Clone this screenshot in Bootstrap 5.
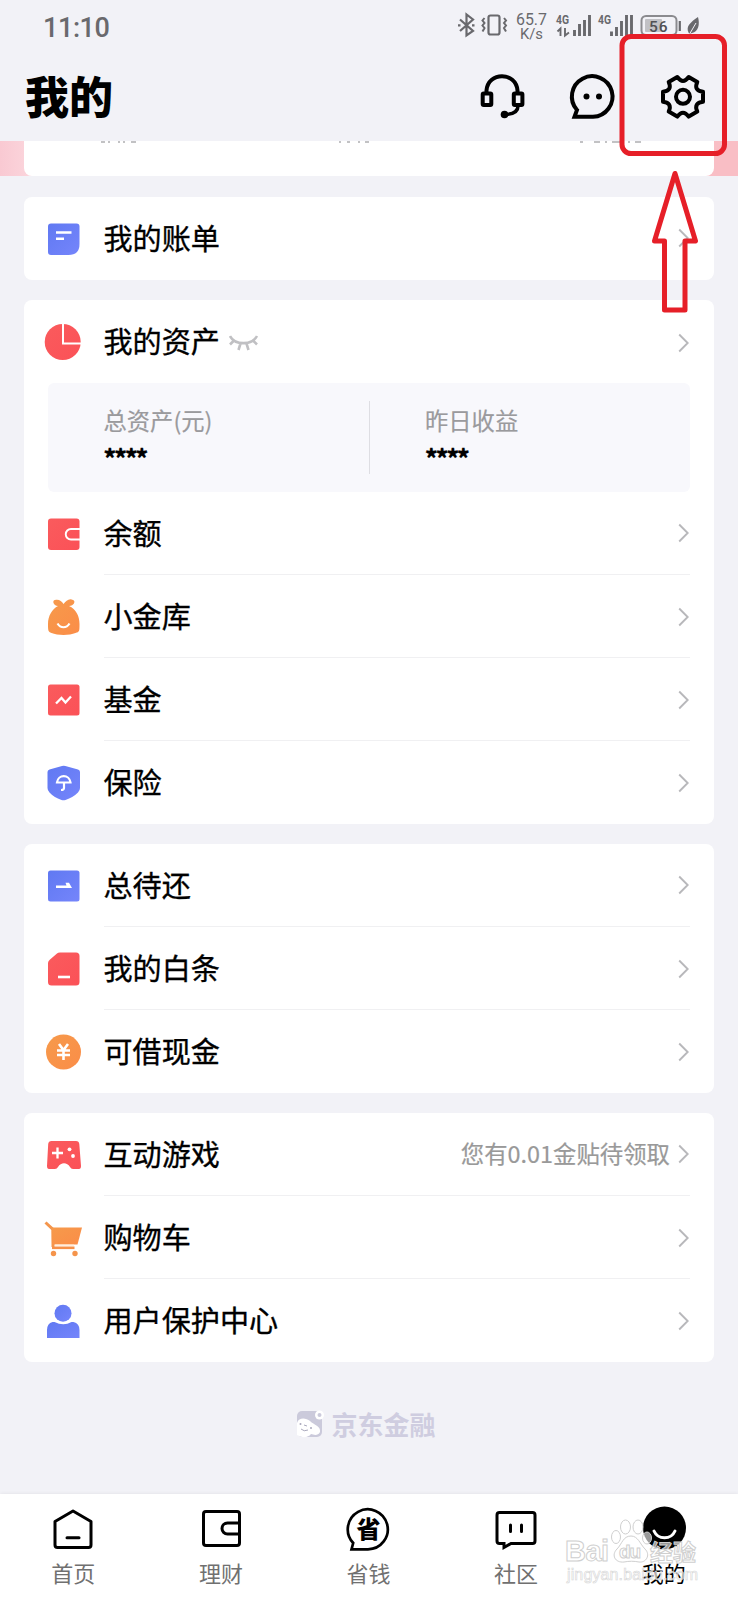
<!DOCTYPE html>
<html lang="zh-CN">
<head>
<meta charset="utf-8">
<meta name="viewport" content="width=device-width, initial-scale=1">
<title>我的</title>
<link href="https://cdn.jsdelivr.net/npm/bootstrap@5.3.0/dist/css/bootstrap.min.css" rel="stylesheet">
<style>
body{background:#f2f2f7;color:#000;font-family:"Noto Sans CJK SC",sans-serif;width:738px;height:1600px;overflow:hidden}
body>*{flex:none}
svg{display:block;flex:none}
.status{height:52px;padding:0 38px 0 43px;color:#69696d;font-family:Roboto,sans-serif}
.clock{font:500 27px/56px Roboto,sans-serif;letter-spacing:-.4px}
.topbar{height:89px;padding:0 32px 0 25px}
.page-title{font-size:44px;font-weight:900;line-height:87px;margin:0}
.strip{height:35px;padding:0 24px;background:linear-gradient(90deg,#f9c9d2 0,#fbd5dc 30px,#f9bec5 700px)}
.strip-card{height:35px;border-radius:0 0 8px 8px;background:#fff}
.panel-card{border-radius:8px;background:#fff;margin:0 24px 20px}
.item{height:83px;padding:0 24px 0 19px}
.item-body{margin:-2px 0 0 21px;height:100%;font-size:29.1px;line-height:40px}
.item+.item .item-body{border-top:1.5px solid #f0f0f2}
.item-name{margin:-2px 0 0 -.5px;-webkit-text-stroke:.35px #000}
.item .chev{margin:1px 1px 0 auto}
.note{font-size:23.4px;color:#999;margin:-1px 0 0 auto;-webkit-text-stroke:.2px #999}
.note+.chev{margin-left:8px!important}
.assets{margin:0 24px;height:109px;background:#f8f8fc;border-radius:6px}
.assets>div{padding:20px 0 0 55.5px;width:50%}
.assets .cap{font-size:23.3px;line-height:34px;color:#9a9a9d;-webkit-text-stroke:.2px #9a9a9d}
.stars{font:900 24px/30px "Noto Sans CJK SC",sans-serif;margin-top:5px;letter-spacing:-2px;-webkit-text-stroke:.2px #000}
.split{height:73px;width:1px;background:#dedee3;align-self:center}
.brand{color:#cfcde0;font-size:26px;font-weight:700;line-height:38px;height:112px;padding-right:7px;margin-top:-1px}
.tabs{height:106px;background:#fff;box-shadow:0 0 4px rgba(0,0,0,.08)}
.tab{flex:1 1 0;padding:11px 1px 0 0;font-size:22px;line-height:32px;color:#707070}
.tab svg{margin-bottom:5px}
.overlay{left:0;top:0;pointer-events:none}
</style>
</head>
<body class="d-flex flex-column position-relative">
<svg width="0" height="0" class="position-absolute">
<defs>
<linearGradient id="b" x1="0" y1="0" x2="1" y2="1"><stop stop-color="#6079f2"/><stop offset="1" stop-color="#7585fb"/></linearGradient>
<linearGradient id="r" x1="0" y1="0" x2="1" y2="1"><stop stop-color="#fa5b5d"/><stop offset="1" stop-color="#fb5157"/></linearGradient>
<linearGradient id="o" x1="0" y1="0" x2="1" y2="1"><stop stop-color="#f69a4b"/><stop offset="1" stop-color="#fb8d48"/></linearGradient>
<symbol id="chev" viewBox="0 0 11 20"><path d="M1.2 1.500 9.700 10 1.200 18.500" fill="none" stroke="#b8b8bb" stroke-width="1.900"/></symbol>
</defs></svg>

<header>
<div class="status d-flex align-items-start">
<div class="clock me-auto">11:10</div>
<svg width="263" height="52" viewBox="457 0 263 52" fill="none" stroke="#69696d" stroke-width="1.8" style="margin-right:-20px">
<path d="M460 19.500 473 31l-6.500 4.500V14.500L473 19.500 460 31M458 25.300h2.500M472 25.300h2.500" stroke-width="2.200"/>
<rect x="488.500" y="15.500" width="11" height="19" rx="2" stroke-width="2.200"/>
<path d="m484.500 18-2 2.500 2 2.500-2 2.500 2 2.500-2 3.500M504 18l2 2.500-2 2.500 2 2.500-2 2.500 2 3.500" stroke-width="2"/>
<g fill="#69696d" stroke="none" font-family="Roboto,sans-serif"><text x="516" y="24.500" font-size="16" textLength="31" lengthAdjust="spacingAndGlyphs">65.7</text><text x="520" y="38.500" font-size="15.500" textLength="23" lengthAdjust="spacingAndGlyphs">K/s</text>
<text x="556" y="24" font-size="12.500" font-weight="700" textLength="13" lengthAdjust="spacingAndGlyphs">4G</text><text x="598" y="24" font-size="12.500" font-weight="700" textLength="13" lengthAdjust="spacingAndGlyphs">4G</text></g>
<path d="M574.500 36v-6M579.500 36v-12M584.500 36v-16M589.500 36V15M611.500 36v-4.500M616.500 36v-9M621.500 36v-15M626.500 36V15M631.500 36V15" stroke-width="2.900"/>
<path d="M557.500 31.500 560.500 28.500V36M565 28v7.500l4-3" stroke-width="1.900"/>
<rect x="641.500" y="16" width="35" height="19" rx="4.500" stroke="#8b8b8f" stroke-width="2"/>
<rect x="645" y="19" width="17" height="13" rx="1" fill="#c1c1c5" stroke="none"/>
<text x="649" y="31.500" font-size="15.500" font-weight="500" fill="#505054" stroke="none" font-family="Roboto,sans-serif" textLength="18.500">56</text>
<path d="M679.800 21v10" stroke-width="2.200"/>
<path d="M698 17c2 7 .5 15-6 16l-2.500 1-1-1.500C685.500 26 691 22 698 17Z" fill="#69696d" stroke="none"/><path d="m689 35 7-12" stroke="#f2f2f7" stroke-width="1"/>
</svg>
</div>
<div class="topbar d-flex">
<h1 class="page-title me-auto">我的</h1>
<svg width="228" height="89" viewBox="478 52 228 89" fill="none" stroke="#000" stroke-width="4">
<path d="M486.500 92V90.500C488 71.500 516 71.500 517.500 90.500V92"/>
<rect x="482.700" y="93.500" width="8.600" height="11.500" rx="1"/><rect x="513.800" y="93.500" width="8.600" height="11.500" rx="1"/>
<path d="M518 106c0 5-4 8-12 8.500" stroke-width="3.500"/><circle cx="504.500" cy="114.500" r="3.800" fill="#000" stroke="none"/>
<path d="M577 110a20.300 20.300 0 1 1 16 6.800h-18.500Z"/><circle cx="586.500" cy="96.500" r="3" fill="#000" stroke="none"/><circle cx="599" cy="96.500" r="3" fill="#000" stroke="none"/>
<g transform="translate(683 96.800)" stroke-width="4" stroke-linejoin="round"><path d="M20 5Q10.400 6 14.300 14.800L5.700 19.800Q0 12-5.700 19.800L-14.300 14.800Q-10.400 6-20 5V-5Q-10.400-6-14.300-14.800L-5.700-19.800Q0-12 5.700-19.800L14.300-14.800Q10.400-6 20-5Z"/><circle r="7"/></g>
</svg>
</div>
</header>

<div class="strip mb-0"><div class="strip-card">
<svg width="690" height="3" viewBox="24 0 690 3" stroke="#85858a" stroke-width="1.200"><path d="M101 1h4m3 0h2m8 0h2m3 0h2m6 0h5M339 1h2m6 0h3m8 0h2m5 0h4M580 1h3m11 0h6m5 0h2m5 0h8m8 0h2m5 0h6" fill="none"/></svg>
</div></div>

<main class="pt-1" style="margin-top:17px">
<section class="panel-card">
<div class="item d-flex align-items-center">
<svg width="40" height="40"><path d="M8 4.500h25.500q3 0 3 3V25q0 11-11 11H8q-3 0-3-3V7.500q0-3 3-3Z" fill="url(#b)"/><path d="M13 13.500h15.500M13 19.800h8" stroke="#fff" stroke-width="2.500"/></svg>
<div class="item-body d-flex flex-fill align-items-center"><span class="item-name">我的账单</span><svg class="chev" width="11" height="20"><use href="#chev"/></svg></div></div>
</section>

<section class="panel-card">
<div class="item d-flex align-items-center">
<svg width="40" height="40"><circle cx="19.700" cy="20" r="18" fill="url(#r)"/><path d="M20 1v20.500h18" stroke="#fff" stroke-width="2" fill="none"/></svg>
<div class="item-body d-flex flex-fill align-items-center"><span class="item-name">我的资产</span>
<svg width="30" height="20" fill="none" stroke="#c0c0c3" stroke-width="2.600" style="margin:5px 0 0 9px"><path d="M1 3c5 9.500 22 9.500 27 0M5 7.500l-4 4M11.500 10.500l-2 6.500M17.500 10.500l2 6.500M24 7.500l4 4"/></svg>
<svg class="chev" width="11" height="20" style="margin-top:5px"><use href="#chev"/></svg></div></div>
<div class="assets d-flex"><div><div class="cap">总资产(元)</div><div class="stars">****</div></div><span class="split"></span><div><div class="cap">昨日收益</div><div class="stars">****</div></div></div>
<div class="item d-flex align-items-center">
<svg width="40" height="40"><rect x="5" y="4.500" width="31.500" height="31.500" rx="3" fill="url(#r)"/><path d="M37 15H28a5 5 0 0 0 0 10.500h9" stroke="#fff" stroke-width="1.900" fill="none"/></svg>
<div class="item-body d-flex flex-fill align-items-center"><span class="item-name">余额</span><svg class="chev" width="11" height="20"><use href="#chev"/></svg></div></div>
<div class="item d-flex align-items-center">
<svg width="40" height="40"><path d="M15 9C10 9 9 3 12 3c4-1 6.500 1 8.500 4C23 4 26 1 30 3c3 1 1 6-4 6 7 3 10.500 10 10.500 18 0 7 0 8-4 9-6 2.500-18 2.500-24 0-3.500-1-3.500-3-3.500-9 0-8 4-15 10-18Z" fill="url(#o)"/><path d="M14.500 26.500c3 5 9 5 12 0" stroke="#fff" stroke-width="2.200" fill="none"/></svg>
<div class="item-body d-flex flex-fill align-items-center"><span class="item-name">小金库</span><svg class="chev" width="11" height="20"><use href="#chev"/></svg></div></div>
<div class="item d-flex align-items-center">
<svg width="40" height="40"><rect x="5" y="4.500" width="31.500" height="31" rx="2.500" fill="url(#r)"/><path d="m13 23.500 5.500-5.500 4 4.500 5.500-6" stroke="#fff" stroke-width="2.300" fill="none"/></svg>
<div class="item-body d-flex flex-fill align-items-center"><span class="item-name">基金</span><svg class="chev" width="11" height="20"><use href="#chev"/></svg></div></div>
<div class="item d-flex align-items-center">
<svg width="40" height="40"><path d="m19 3q1.700-.7 3.400 0l12.600 3.500q2 .5 2 2.500v16q0 2.500-2 4.500-5 5-12.500 7.500-2 .7-4 0Q11 34.500 6.500 29.500q-2-2-2-4.500V9q0-2 2-2.500Z" fill="url(#b)"/><path d="M14 19.500c1-8.500 12.500-8.500 13.500 0ZM21 19v6q0 2-3 2" stroke="#fff" stroke-width="2.200" fill="none"/></svg>
<div class="item-body d-flex flex-fill align-items-center"><span class="item-name">保险</span><svg class="chev" width="11" height="20"><use href="#chev"/></svg></div></div>
</section>

<section class="panel-card">
<div class="item d-flex align-items-center">
<svg width="40" height="40"><rect x="5" y="4.500" width="31.500" height="31" rx="2.500" fill="url(#b)"/><path d="M13 19.500h10.500l-1-2.700h3.500l3 5.200H13Z" fill="#fff"/></svg>
<div class="item-body d-flex flex-fill align-items-center"><span class="item-name">总待还</span><svg class="chev" width="11" height="20"><use href="#chev"/></svg></div></div>
<div class="item d-flex align-items-center">
<svg width="40" height="40"><path d="M17 3.500h16q3.500 0 3.500 3.500v26q0 3.500-3.500 3.500H8.500Q5 36.500 5 33V14q0-2 2-3.500l7-6q1-1 3-1Z" fill="url(#r)"/><path d="M15 28h12" stroke="#fff" stroke-width="2.600"/></svg>
<div class="item-body d-flex flex-fill align-items-center"><span class="item-name">我的白条</span><svg class="chev" width="11" height="20"><use href="#chev"/></svg></div></div>
<div class="item d-flex align-items-center">
<svg width="40" height="40"><circle cx="20.500" cy="20" r="17.500" fill="url(#o)"/><path d="m16 12 4.500 6 4.500-6M14 18.500h13M14 23h13M20.500 18v10" stroke="#fff" stroke-width="2.600" fill="none"/></svg>
<div class="item-body d-flex flex-fill align-items-center"><span class="item-name">可借现金</span><svg class="chev" width="11" height="20"><use href="#chev"/></svg></div></div>
</section>

<section class="panel-card">
<div class="item d-flex align-items-center">
<svg width="40" height="40"><path d="M8.500 6h24.500q3 0 3.300 3L38 31q0 3-2 3h-6q-2 0-3-2c-3-5-9-5-12 0q-1 2-3 2H6q-2 0-2-3L5.200 9q.3-3 3.300-3Z" fill="url(#r)"/><path d="M14.500 12.500v11M9 18h11" stroke="#fff" stroke-width="2.300"/><circle cx="26.500" cy="14.300" r="1.900" fill="#fff"/><circle cx="30" cy="21" r="1.900" fill="#fff"/></svg>
<div class="item-body d-flex flex-fill align-items-center"><span class="item-name">互动游戏</span><span class="note">您有0.01金贴待领取</span><svg class="chev" width="11" height="20"><use href="#chev"/></svg></div></div>
<div class="item d-flex align-items-center">
<svg width="40" height="40"><path d="m2.500 4.500 7.500 7V29" fill="none" stroke="#f4954c" stroke-width="3"/><path d="M8.500 9.500H39l-4.500 17H9Z" fill="url(#o)"/><path d="M9 29.800h22.500" stroke="#f69049" stroke-width="2.600"/><path d="M12 26.800h19" stroke="#ffd9b8" stroke-width="1.300"/><circle cx="10.500" cy="35.500" r="2.700" fill="#f5944b"/><circle cx="32" cy="35.500" r="2.700" fill="#f5944b"/></svg>
<div class="item-body d-flex flex-fill align-items-center"><span class="item-name">购物车</span><svg class="chev" width="11" height="20"><use href="#chev"/></svg></div></div>
<div class="item d-flex align-items-center">
<svg width="40" height="40"><circle cx="20" cy="12.200" r="8.500" fill="url(#b)"/><path d="M9.500 21h2q9 4.500 17 0h2q6 1.500 6 8v8H4v-8q0-6.500 5.500-8Z" fill="url(#b)"/></svg>
<div class="item-body d-flex flex-fill align-items-center"><span class="item-name">用户保护中心</span><svg class="chev" width="11" height="20"><use href="#chev"/></svg></div></div>
</section>
</main>

<div class="brand d-flex justify-content-center pt-4">
<svg class="mt-1" width="30" height="30" style="margin-right:6px"><rect x="2" y="2" width="25" height="26" rx="5" fill="#cbcadb"/><path d="M2 14c2-6 9-5 13-2 4 4 11 5 10 11-2 4-6 3-9 2-3 4-9 4-14 1Z" fill="#fff"/><circle cx="24.500" cy="6" r="4.500" fill="#fff"/><circle cx="24.500" cy="6" r="2" fill="#cbcadb"/><circle cx="5.500" cy="15" r="1" fill="#aaa9bd"/><circle cx="16" cy="19" r="1" fill="#aaa9bd"/><path d="m9 16 3 1M6 20q3 3 7 1" stroke="#aaa9bd" fill="none"/></svg>
京东金融</div>

<nav class="tabs d-flex text-center mt-auto">
<div class="tab d-flex flex-column align-items-center"><svg width="46" height="46" fill="none" stroke="#000" stroke-width="3" stroke-linejoin="round"><path d="M23 6 41 16.500V40q0 2.500-2.500 2.500h-31Q5 42.500 5 40V16.500Z"/><path d="M17 32.800h12" stroke-linecap="round"/></svg>首页</div>
<div class="tab d-flex flex-column align-items-center"><svg width="46" height="46" fill="none" stroke="#000" stroke-width="3"><rect x="5.500" y="6.500" width="36" height="34" rx="2.500"/><path d="M41 18H29.500a5.500 5.500 0 0 0 0 11H41"/></svg>理财</div>
<div class="tab d-flex flex-column align-items-center"><svg width="46" height="46" fill="none" stroke="#000" stroke-width="2.700"><path d="M8.200 38A20 20 0 1 1 23 44.300H6.500Z"/><text x="23.500" y="33" font-size="24" font-weight="900" text-anchor="middle" fill="#000" stroke="none">省</text></svg>省钱</div>
<div class="tab d-flex flex-column align-items-center"><svg width="46" height="46" fill="none" stroke="#000" stroke-width="3"><path d="M6.500 7.500h33q2.500 0 2.500 2.500v26q0 2.500-2.500 2.500H18l-7 4v-4H6.500Q4 38.500 4 36V10q0-2.500 2.500-2.500Z"/><path d="M17.500 20v6.500M28.500 20v6.500" stroke-linecap="round"/></svg>社区</div>
<div class="tab d-flex flex-column align-items-center text-black"><svg width="46" height="46"><circle cx="23.500" cy="23" r="21.500"/><path d="M13 26c4 9 17 9 21 0" fill="none" stroke="#fff" stroke-width="3" stroke-linecap="round"/></svg>我的</div>
</nav>

<svg class="overlay position-absolute" width="738" height="1600" fill="none">
<g stroke="#e61f28" stroke-width="5" stroke-linejoin="round"><rect x="622" y="36.500" width="102.500" height="117" rx="9"/><path d="m675 173.500 20.500 67.500H685v69h-20.500v-69h-10Z"/></g>
<g fill="#fff" fill-opacity=".6" stroke="#cfcfcf" stroke-width="1" font-family="Liberation Sans,sans-serif">
<text x="565" y="1561" font-size="29" font-weight="700" textLength="44">Bai</text>
<ellipse cx="616" cy="1537" rx="4.500" ry="6.500"/><ellipse cx="625.500" cy="1527" rx="5" ry="7"/><ellipse cx="638" cy="1527" rx="5" ry="7"/><ellipse cx="647" cy="1538" rx="4.500" ry="6"/>
<path d="M631 1536c7 0 9 8 14 13 6 6 1 14-6 13-5-1-10-1-15 0-9 1-13-7-7-13 5-5 6-13 14-13Z"/>
<text x="619" y="1558" font-size="19" font-weight="700" textLength="22">du</text>
<text x="650" y="1561" font-size="23" font-weight="700" font-family="Noto Sans CJK SC,sans-serif" textLength="46">经验</text>
<text x="567" y="1580" font-size="16" textLength="131" stroke-width=".6" stroke="#d6d6d6">jingyan.baidu.com</text>
</g></svg>
<script src="https://cdn.jsdelivr.net/npm/bootstrap@5.3.0/dist/js/bootstrap.bundle.min.js"></script>
</body>
</html>
